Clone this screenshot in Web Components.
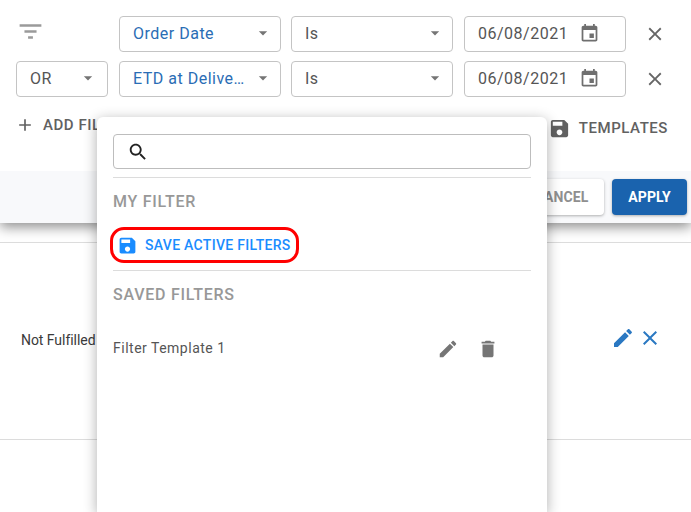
<!DOCTYPE html>
<html><head><meta charset="utf-8">
<style>
html,body{margin:0;padding:0;background:#fff;height:512px;overflow:hidden;font-family:Roboto,sans-serif}
</style></head>
<body>
<app-page></app-page>
<script>
const P={
 arrow:'M7 10l5 5 5-5z',
 cal:'M17 12h-5v5h5v-5zM16 1v2H8V1H6v2H5c-1.11 0-1.99.9-1.99 2L3 19c0 1.1.89 2 2 2h14c1.1 0 2-.9 2-2V5c0-1.1-.9-2-2-2h-1V1h-2zm3 18H5V8h14v11z',
 close:'M19 6.41L17.59 5 12 10.59 6.41 5 5 6.41 10.59 12 5 17.59 6.41 19 12 13.41 17.59 19 19 17.59 13.41 12z',
 filter:'M3 6v2h18V6H3zm4 7h10v-2H7v2zm3 5h4v-2h-4v2z',
 plus:'M19 13h-6v6h-2v-6H5v-2h6V5h2v6h6v2z',
 save:'M17 3H5c-1.11 0-2 .9-2 2v14c0 1.1.89 2 2 2h14c1.1 0 2-.9 2-2V7l-4-4zm-5 16c-1.66 0-3-1.34-3-3s1.34-3 3-3 3 1.34 3 3-1.34 3-3 3zm3-10H5V5h10v4z',
 search:'M15.5 14h-.79l-.28-.27C15.41 12.59 16 11.11 16 9.5 16 5.91 13.09 3 9.5 3S3 5.91 3 9.5 5.91 16 9.5 16c1.61 0 3.09-.59 4.23-1.57l.27.28v.79l5 4.99L20.49 19l-4.99-5zm-6 0C7.01 14 5 11.99 5 9.5S7.01 5 9.5 5 14 7.01 14 9.5 11.99 14 9.5 14z',
 edit:'M3 17.25V21h3.75L17.81 9.94l-3.75-3.75L3 17.25zM20.71 7.04c.39-.39.39-1.02 0-1.41l-2.34-2.34c-.39-.39-1.02-.39-1.41 0l-1.83 1.83 3.75 3.75 1.83-1.83z',
 trash:'M6 19c0 1.1.9 2 2 2h8c1.1 0 2-.9 2-2V7H6v12zM19 4h-3.5l-1-1h-5l-1 1H5v2h14V4z'
};
class UiIcon extends HTMLElement{
 connectedCallback(){
  const s=this.getAttribute('size')||24;
  this.attachShadow({mode:'open'}).innerHTML=`<style>:host{display:inline-flex;flex:none;width:${s}px;height:${s}px;color:inherit}svg{display:block}</style><svg width="${s}" height="${s}" viewBox="0 0 24 24" fill="currentColor"><path d="${P[this.getAttribute('name')]}"/></svg>`;
 }
}
customElements.define('ui-icon',UiIcon);
class UiField extends HTMLElement{
 connectedCallback(){
  const w=this.getAttribute('w'),blue=this.hasAttribute('blue'),date=this.hasAttribute('date');
  this.attachShadow({mode:'open'}).innerHTML=`<style>
  :host{display:flex;flex:none;width:${w}px;height:36px;box-sizing:border-box;border:1px solid #c4c4c4;border-radius:4px;align-items:center;background:#fff;padding-bottom:2px}
  .t{flex:1;font-size:16px;letter-spacing:.5px;color:${blue?'#2a6db5':'#555'};white-space:nowrap;padding-left:13px}
  .a{color:#757575;margin-right:${this.getAttribute('ar')||7}px}
  .c{color:#6f6f6f;margin-right:25px}
  </style><span class="t"><slot></slot></span>${date?'<ui-icon class="c" name="cal" size="21"></ui-icon>':'<ui-icon class="a" name="arrow" size="20"></ui-icon>'}`;
 }
}
customElements.define('ui-field',UiField);
class FilterRow extends HTMLElement{
 connectedCallback(){
  const first=this.hasAttribute('first');
  this.attachShadow({mode:'open'}).innerHTML=`<style>
  :host{display:flex;align-items:center;height:36px}
  .lead{width:92px;flex:none;margin-right:11px;display:flex}
  .fi{color:#9a9a9a;margin:-5px 0 0 0}
  .x{color:#666;margin:-1px 0 0 18px}
  ui-field+ui-field{margin-left:10px}
  ui-field.d{margin-left:11px}
  </style>
  <div class="lead">${first?'<ui-icon class="fi" name="filter" size="29"></ui-icon>':'<ui-field w="92" ar="9">OR</ui-field>'}</div>
  <ui-field w="162" blue>${first?'Order Date':'ETD at Delive…'}</ui-field>
  <ui-field w="162">Is</ui-field>
  <ui-field class="d" w="162" date>06/08/2021</ui-field>
  <ui-icon class="x" name="close" size="22"></ui-icon>`;
 }
}
customElements.define('filter-row',FilterRow);
class FilterPanel extends HTMLElement{
 connectedCallback(){
  this.attachShadow({mode:'open'}).innerHTML=`<style>
  :host{display:block;height:223px;background:#fff;box-shadow:0 4px 12px rgba(0,0,0,.45);position:relative;box-sizing:border-box;overflow:visible}
  .rows{padding:16px 0 0 16px;display:flex;flex-direction:column;gap:9px}
  .actions{display:flex;justify-content:space-between;padding:0 23px 0 15px;height:74px;box-sizing:border-box;font-size:15px;font-weight:500;color:#616161;letter-spacing:.55px}
  .act{display:flex;align-items:center;height:20px}
  .add{margin-top:18px;gap:8px}
  .tpl{margin-top:21px;gap:8px}
  .foot{height:52px;background:#f8f9fb;display:flex;justify-content:flex-end;align-items:center;gap:8px;padding-right:4px;box-sizing:border-box}
  .btn{height:36px;box-sizing:border-box;border-radius:4px;display:flex;align-items:center;justify-content:center;font-size:14px;font-weight:700;letter-spacing:.1px;box-shadow:0 1px 3px rgba(0,0,0,.3);padding-bottom:1px}
  .can{width:85px;background:#fff;color:#8f8f8f}
  .app{width:75px;background:#1a63ae;color:#fff}
  </style>
  <div class="rows"><filter-row first></filter-row><filter-row></filter-row></div>
  <div class="actions"><div class="act add"><ui-icon name="plus" size="20"></ui-icon><span>ADD FILTER</span></div><div class="act tpl"><ui-icon name="save" size="23"></ui-icon><span>TEMPLATES</span></div></div>
  <div class="foot"><div class="btn can">CANCEL</div><div class="btn app">APPLY</div></div>`;
 }
}
customElements.define('filter-panel',FilterPanel);
class DataRow extends HTMLElement{
 connectedCallback(){
  this.attachShadow({mode:'open'}).innerHTML=`<style>
  :host{display:flex;align-items:center;justify-content:space-between;height:198px;box-sizing:border-box;border-top:1px solid #dcdcdc;border-bottom:1px solid #dcdcdc;margin-top:19px;padding:0 29px 2px 21px}
  .t{font-size:14px;color:#3a3a3a;letter-spacing:-.05px}
  .ic{display:flex;gap:3px;color:#2a78c2;margin-top:-4px}
  </style><span class="t">Not Fulfilled</span><div class="ic"><ui-icon name="edit" size="24"></ui-icon><ui-icon name="close" size="24"></ui-icon></div>`;
 }
}
customElements.define('data-row',DataRow);
class TemplatePopover extends HTMLElement{
 connectedCallback(){
  this.attachShadow({mode:'open'}).innerHTML=`<style>
  :host{position:absolute;left:97px;top:117px;width:450px;height:395px;background:#fff;border-radius:6px 6px 0 0;box-shadow:0 3px 14px rgba(0,0,0,.32);box-sizing:border-box;padding:17px 16px 0;display:block}
  .search{height:35px;border:1px solid #bdbdbd;border-radius:4px;display:flex;align-items:center;padding-left:13px;color:#222;box-sizing:border-box}
  hr{border:0;border-top:1px solid #dcdcdc;margin:0}
  .h{font-size:16px;font-weight:500;letter-spacing:.75px;color:#989898;line-height:20px}
  .save{display:flex;align-items:center;height:20px;color:#1a8cff;font-size:14px;font-weight:500;letter-spacing:.3px;padding-left:4px;gap:7px;position:relative}
  .mark{position:absolute;left:-3px;top:-8px;width:189px;height:36px;box-sizing:border-box;border:3px solid #f00;border-radius:14px}
  .item{display:flex;align-items:center;height:24px;font-size:14px;letter-spacing:.5px;color:#555}
  .item span{flex:1}
  .item ui-icon{color:#757575}
  </style>
  <div class="search"><ui-icon name="search" size="22"></ui-icon></div>
  <hr style="margin-top:8px">
  <div class="h" style="margin-top:14px">MY FILTER</div>
  <div class="save" style="margin-top:23px"><ui-icon name="save" size="21"></ui-icon><span>SAVE ACTIVE FILTERS</span><div class="mark"></div></div>
  <hr style="margin-top:15px">
  <div class="h" style="margin-top:14px">SAVED FILTERS</div>
  <div class="item" style="margin-top:31px"><span>Filter Template 1</span><ui-icon name="edit" size="22" style="margin-right:18px;margin-top:2px"></ui-icon><ui-icon name="trash" size="22" style="margin-right:32px;margin-top:2px"></ui-icon></div>`;
 }
}
customElements.define('template-popover',TemplatePopover);
class AppPage extends HTMLElement{
 connectedCallback(){
  this.attachShadow({mode:'open'}).innerHTML=`<style>:host{display:block;position:relative;width:691px;height:512px;overflow:hidden;background:#fff;font-family:Roboto,sans-serif}</style>
  <filter-panel></filter-panel><data-row></data-row><template-popover></template-popover>`;
 }
}
customElements.define('app-page',AppPage);
</script>
</body></html>
